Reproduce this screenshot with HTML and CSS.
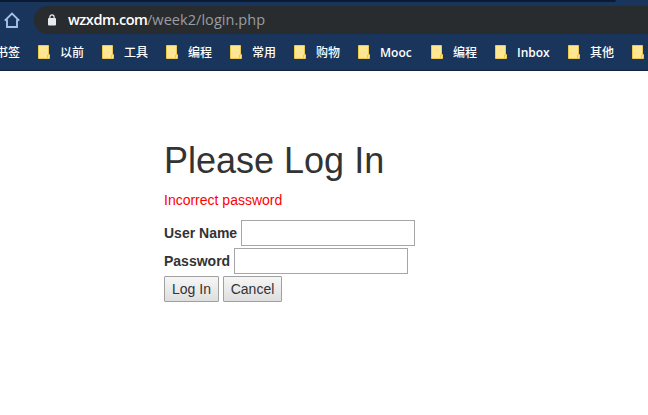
FILE: index.html
```html
<!DOCTYPE html>
<html lang="zh-CN">
<head>
<meta charset="utf-8">
<title>Login</title>
<link rel="stylesheet" href="styles.css">
</head>
<body>
<svg class="defs" width="0" height="0" aria-hidden="true">
  <symbol id="folder" viewBox="0 0 12 14">
    <path d="M.5.5h10v9h1v4H.5z" fill="#ffe693" stroke="#ebc84e"/>
    <path d="M9.5 13.5v-3.500h1" fill="none" stroke="#ebc84e"/>
  </symbol>
</svg>
<header class="chrome">
  <div class="tabstrip"></div>
  <div class="toolbar">
    <svg class="home" width="16" height="16" viewBox="0 0 16 16"><path d="M.8 8.700 8 1.500l7.200 7.200M3 7.500V15h10V7.500" fill="none" stroke="#a9c0e6" stroke-width="1.900"/></svg>
    <div class="address">
      <svg class="lock" width="8" height="12" viewBox="0 0 8 12"><path d="M1.900 5V2.900a2.100 2.100 0 0 1 4.200 0V5" fill="none" stroke="#e8eaed" stroke-width="1.200"/><rect y="4" width="8" height="7.500" rx="1" fill="#e8eaed"/></svg>
      <span class="url"><span class="host">wzxdm.com</span><span class="path">/week2/login.php</span></span>
    </div>
  </div>
  <nav class="bookmarks">
    <span class="label first">书签</span>
    <svg class="folder"><use href="#folder"/></svg><span class="label">以前</span>
    <svg class="folder"><use href="#folder"/></svg><span class="label">工具</span>
    <svg class="folder"><use href="#folder"/></svg><span class="label">编程</span>
    <svg class="folder"><use href="#folder"/></svg><span class="label">常用</span>
    <svg class="folder"><use href="#folder"/></svg><span class="label">购物</span>
    <svg class="folder"><use href="#folder"/></svg><span class="label wide">Mooc</span>
    <svg class="folder"><use href="#folder"/></svg><span class="label">编程</span>
    <svg class="folder"><use href="#folder"/></svg><span class="label wide">Inbox</span>
    <svg class="folder"><use href="#folder"/></svg><span class="label">其他</span>
    <svg class="folder"><use href="#folder"/></svg>
  </nav>
</header>
<main class="container">
  <h1>Please Log In</h1>
  <p class="error">Incorrect password</p>
  <form>
    <div class="row"><label for="nam">User Name</label><input type="text" id="nam"></div>
    <div class="row"><label for="pw">Password</label><input type="password" id="pw"></div>
    <div class="row"><button type="button" class="login">Log In</button><button type="button" class="cancel">Cancel</button></div>
  </form>
</main>
</body>
</html>
```
FILE: styles.css
```css
* { box-sizing: border-box; }
body {
  margin: 0;
  height: 415px;
  overflow: hidden;
  background: #fff;
  color: #333;
  font: 14px/20px "Liberation Sans", Arial, sans-serif;
}
.defs { display: block; }
.chrome {
  height: 71px;
  background: #1a355b;
  border-bottom: 1px solid #0f2340;
  overflow: hidden;
}
.tabstrip {
  width: 616px;
  height: 2px;
  background: #0a1a33;
  border-bottom-right-radius: 2px;
}
.toolbar {
  display: flex;
  height: 32px;
  padding: 4px 0 0 4px;
}
.home { flex: none; margin: 6px 14px 0 0; }
.address {
  flex: 1;
  display: flex;
  align-items: center;
  height: 28px;
  padding-left: 14px;
  border-radius: 14px 0 0 14px;
  background: #292c2f;
}
.lock { flex: none; margin-right: 12px; }
.url {
  color: #9a9da1;
  font: 14.5px/28px "Open Sans", sans-serif;
  white-space: nowrap;
}
.url span { display: inline-block; }
.host { width: 79px; color: #fff; font-weight: 600; letter-spacing: -0.45px; }
.path { letter-spacing: 0.05px; }
.bookmarks {
  display: flex;
  align-items: center;
  height: 36px;
  margin-left: -4px;
  white-space: nowrap;
}
.folder { flex: none; width: 12px; height: 14px; margin-right: 10px; }
.label {
  flex: none;
  width: 24px;
  margin-right: 18px;
  padding-top: 2px;
  color: #fff;
  font: 500 12px/18px "Open Sans", "Noto Sans CJK SC", sans-serif;
}
.label.wide { width: 33px; font-weight: 600; }
.container { padding: 70px 0 0 164px; }
h1 {
  margin: 0 0 10px;
  font-size: 36px;
  font-weight: 400;
  line-height: 39px;
}
.error { margin: 0 0 10px; color: #f00; }
.row { display: flex; height: 28px; }
label { margin-right: 4px; font-weight: 700; line-height: 26px; }
input {
  width: 174px;
  height: 26px;
  padding: 2px;
  border: 1px solid #a6a6a9;
  border-radius: 0;
  background: #fff;
}
button {
  height: 26px;
  margin: 0 4px 0 0;
  padding: 0;
  border: 1px solid #a0a0a0;
  border-radius: 1px;
  background: linear-gradient(#f6f6f6, #dedede);
  color: #333;
  font: inherit;
}
.login { width: 55px; }
.cancel { width: 59px; }
```
